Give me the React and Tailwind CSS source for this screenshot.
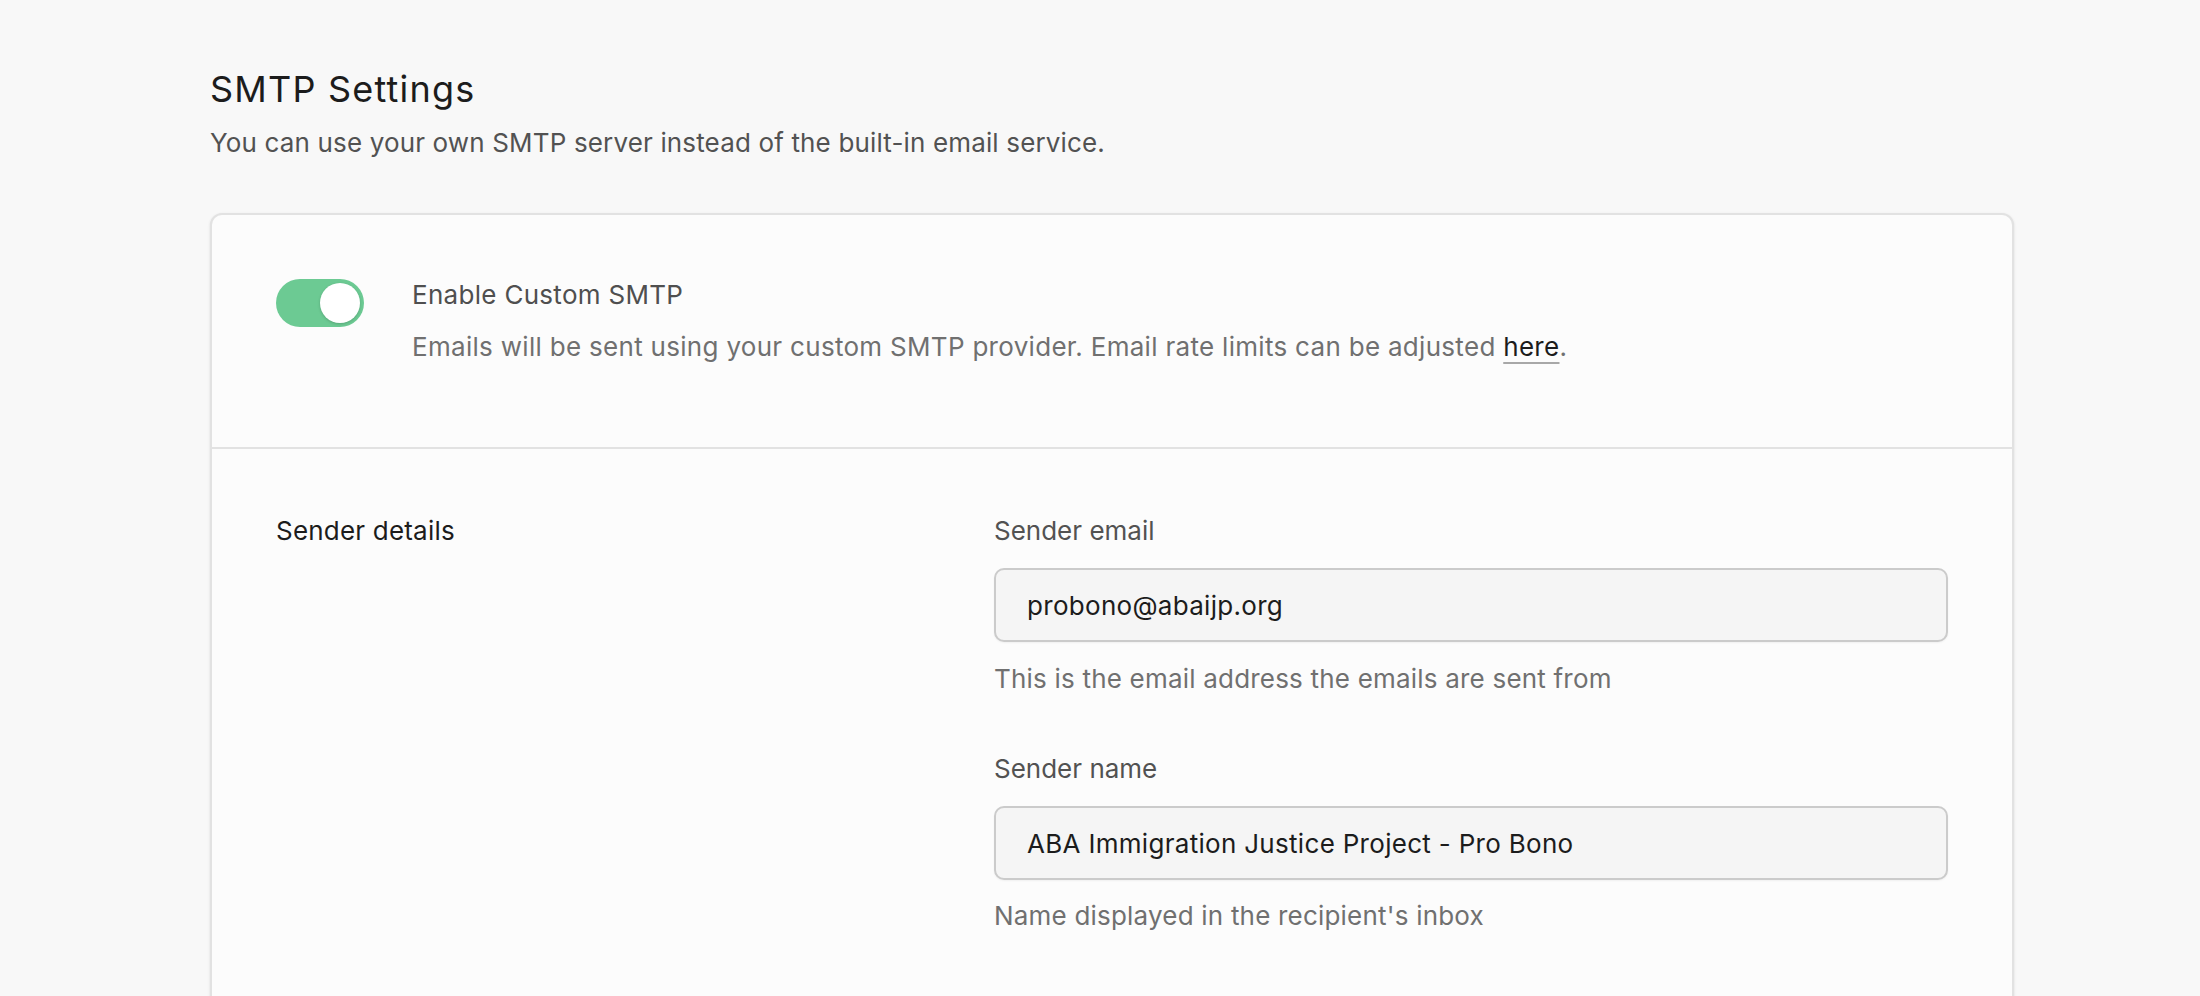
export default function App() {
  const font = "font-['Inter','Liberation_Sans',sans-serif]";
  return (
    <div className={`min-h-screen bg-[#f8f8f8] ${font} antialiased`}>
      <div className="pl-[210px] pt-[69px] w-[2014px]">
        <h1 className="text-[36px] leading-[40px] tracking-[1.2px] text-[#1c1c1c] font-normal">SMTP Settings</h1>
        <p className="mt-4 text-[26px] leading-[36px] tracking-[0.15px] text-[#525252]">
          You can use your own SMTP server instead of the built-in email service.
        </p>

        <div className="mt-[52px] rounded-[12px] border-2 border-[#e2e2e2] bg-[#fcfcfc] shadow-sm">
          <div className="flex gap-[48px] px-16 pt-16 pb-[82px]">
            <div className="relative h-[48px] w-[88px] shrink-0 rounded-full bg-[#6cca93]">
              <div className="absolute right-[4px] top-[4px] h-[40px] w-[40px] rounded-full bg-white shadow-[0_1px_3px_rgba(0,0,0,0.18)]" />
            </div>
            <div className="tracking-[0.3px]">
              <div className="text-[26px] leading-[32px] text-[#4f4f4f]">Enable Custom SMTP</div>
              <div className="mt-[18px] text-[26px] leading-[36px] text-[#707070]">
                Emails will be sent using your custom SMTP provider. Email rate limits can be adjusted{" "}
                <span className="text-[#1c1c1c] underline decoration-[#a8a8a8] decoration-2 underline-offset-[6px]">here</span>.
              </div>
            </div>
          </div>

          <div className="border-t-2 border-[#e2e2e2]" />

          <div className="grid grid-cols-[1fr_954px] px-16 pt-16 pb-16 tracking-[0.2px]">
            <div className="text-[26px] leading-[36px] text-[#1c1c1c]">Sender details</div>
            <div className="flex flex-col">
              <div className="text-[26px] leading-[36px] tracking-[0px] text-[#525252]">Sender email</div>
              <div className="mt-[19px] flex h-[74px] items-center rounded-[10px] border-2 border-[#cbcbcb] bg-[#f5f5f5] px-[31px] text-[26px] tracking-[0.3px] text-[#1c1c1c] shadow-[0_1px_2px_rgba(0,0,0,0.05)]">
                probono@abaijp.org
              </div>
              <div className="mt-[19px] text-[26px] leading-[36px] text-[#707070]">
                This is the email address the emails are sent from
              </div>

              <div className="mt-[54px] text-[26px] leading-[36px] tracking-[0px] text-[#525252]">Sender name</div>
              <div className="mt-[19px] flex h-[74px] items-center rounded-[10px] border-2 border-[#cbcbcb] bg-[#f5f5f5] px-[31px] text-[26px] tracking-[0.3px] text-[#1c1c1c] shadow-[0_1px_2px_rgba(0,0,0,0.05)]">
                ABA Immigration Justice Project - Pro Bono
              </div>
              <div className="mt-[18px] text-[26px] leading-[36px] text-[#707070]">
                Name displayed in the recipient's inbox
              </div>
              <div className="h-[200px]" />
            </div>
          </div>
        </div>
      </div>
    </div>
  );
}
